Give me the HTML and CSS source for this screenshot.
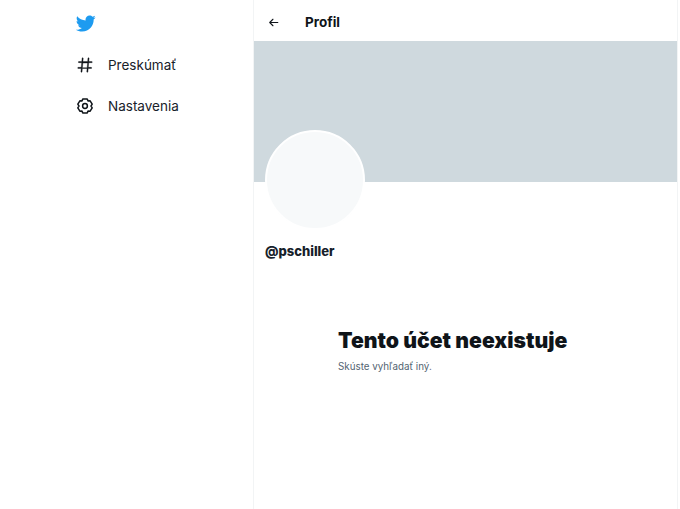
FILE: index.html
```html
<!DOCTYPE html>
<html lang="sk">
<head>
<meta charset="utf-8">
<title>Profil</title>
<link rel="stylesheet" href="styles.css">
</head>
<body>
<div class="app">
  <nav class="sidebar">
    <svg class="logo" viewBox="0 0 24 24"><path d="M23.643 4.937c-.835.37-1.732.62-2.675.733.962-.576 1.7-1.49 2.048-2.578-.9.534-1.897.922-2.958 1.13-.85-.904-2.06-1.47-3.4-1.47-2.572 0-4.658 2.086-4.658 4.66 0 .364.042.718.12 1.06-3.873-.195-7.304-2.05-9.602-4.868-.4.69-.63 1.49-.63 2.342 0 1.616.823 3.043 2.072 3.878-.764-.025-1.482-.234-2.11-.583v.06c0 2.257 1.605 4.14 3.737 4.568-.392.106-.803.162-1.227.162-.3 0-.593-.028-.877-.082.593 1.85 2.313 3.198 4.352 3.234-1.595 1.25-3.604 1.995-5.786 1.995-.376 0-.747-.022-1.112-.065 2.062 1.323 4.51 2.093 7.14 2.093 8.57 0 13.255-7.098 13.255-13.254 0-.2-.005-.402-.014-.602.91-.658 1.7-1.477 2.323-2.41z"/></svg>
    <a class="nav-item">
      <svg class="nav-icon hash" viewBox="0 0 24 24"><path d="M21 7.337h-3.93l.372-4.272c.036-.412-.27-.775-.682-.812-.417-.03-.776.27-.812.683l-.383 4.4h-6.32l.37-4.27c.037-.413-.27-.776-.68-.813-.42-.03-.777.27-.813.683l-.382 4.4H3.782c-.414 0-.75.337-.75.75s.336.75.75.75H7.61l-.55 6.327H3c-.414 0-.75.336-.75.75s.336.75.75.75h3.93l-.372 4.272c-.036.412.27.775.682.812l.066.003c.385 0 .712-.295.746-.686l.383-4.4h6.32l-.37 4.27c-.036.413.27.776.682.813l.066.003c.385 0 .712-.295.746-.686l.382-4.4h3.957c.413 0 .75-.337.75-.75s-.337-.75-.75-.75h-3.825l.55-6.327H21c.413 0 .75-.336.75-.75s-.337-.75-.75-.75zm-6.115 8.327h-6.32l.55-6.326h6.32l-.55 6.326z"/></svg>
      <span>Preskúmať</span>
    </a>
    <a class="nav-item">
      <svg class="nav-icon gear" viewBox="0 0 24 24"><circle cx="12" cy="12" r="3.2"/><path d="M9 2.8h6l1 2.4 2.6-.3 3 4.7-1.6 2.4 1.6 2.4-3 4.7-2.6-.3-1 2.4H9l-1-2.4-2.6.3-3-4.7L4 12 2.4 9.6l3-4.7 2.6.3z"/></svg>
      <span>Nastavenia</span>
    </a>
  </nav>
  <main class="main">
    <header class="topbar">
      <svg class="back" viewBox="0 0 24 24"><path d="M20 11H7.414l4.293-4.293c.39-.39.39-1.023 0-1.414s-1.023-.39-1.414 0l-6 6c-.39.39-.39 1.023 0 1.414l6 6c.195.195.45.293.707.293s.512-.098.707-.293c.39-.39.39-1.023 0-1.414L7.414 13H20c.553 0 1-.447 1-1s-.447-1-1-1z"/></svg>
      <h2 class="title">Profil</h2>
    </header>
    <div class="banner"></div>
    <div class="profile">
      <div class="avatar"></div>
      <div class="handle">@pschiller</div>
    </div>
    <section class="empty">
      <h1 class="empty-title">Tento účet neexistuje</h1>
      <p class="empty-text">Skúste vyhľadať iný.</p>
    </section>
  </main>
</div>
</body>
</html>
```
FILE: styles.css
```css
* { box-sizing: border-box; }
html, body { margin: 0; height: 100%; background: #fff; overflow: hidden; }
body { font-family: Inter, "Liberation Sans", sans-serif; color: #0f1419; }
.app { display: flex; height: 509px; width: 680px; }
.sidebar { width: 253px; flex: none; padding: 13px 0 0 75px; display: flex; flex-direction: column; }
.logo { width: 21px; height: 21px; fill: #1d9bf0; }
.nav-item { display: flex; align-items: center; gap: 14px; height: 41px; margin-left: 1px; font-size: 13.5px; color: #18212a; }
.nav-item:first-of-type { margin-top: 10px; }
.nav-icon { width: 18px; height: 18px; fill: #0f1419; }
.hash { stroke: #0f1419; stroke-width: 0.5; }
.gear { fill: none; stroke: #0f1419; stroke-width: 2; stroke-linejoin: round; }
.main { width: 425px; flex: none; border-left: 1px solid #f2f4f5; border-right: 1px solid #f2f4f5; height: 509px; }
.topbar { height: 41px; display: flex; align-items: center; padding: 3px 0 0 13px; gap: 25px; }
.back { width: 13px; height: 13px; fill: #0f1419; }
.title { margin: 0; font-size: 13.5px; font-weight: 700; }
.banner { height: 141px; background: #cfd9de; }
.profile { position: relative; padding: 61px 0 0 11px; }
.avatar { position: absolute; left: 11px; top: -52px; width: 100px; height: 100px; border-radius: 50%; background: #f7f9fa; border: 2px solid #fff; }
.handle { font-size: 13px; font-weight: 800; line-height: 17px; color: #16202a; }
.empty { padding: 66px 0 0 84px; }
.empty-title { margin: 0; font-size: 21.2px; line-height: 28px; font-weight: 900; color: #0f1419; }
.empty-text { margin: 6px 0 0; font-size: 9.8px; line-height: 13px; color: #536471; }
```
